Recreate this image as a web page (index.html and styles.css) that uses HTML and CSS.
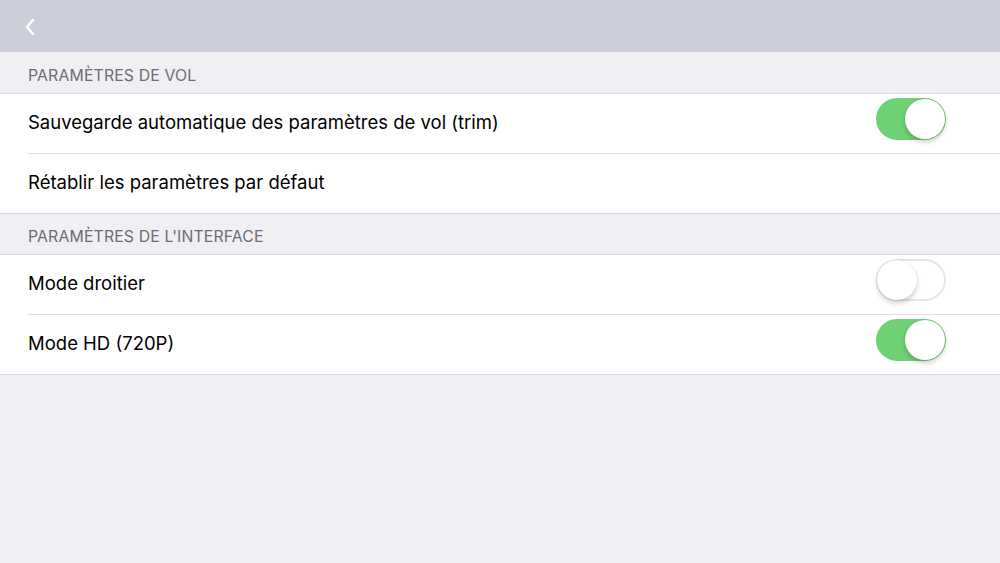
FILE: index.html
```html
<!DOCTYPE html>
<html lang="fr">
<head>
<meta charset="utf-8">
<link rel="stylesheet" href="styles.css">
</head>
<body>
<header class="navbar">
  <svg class="back" width="14" height="20" viewBox="0 0 14 20"><path d="M10 3 L4 10 L10 17" fill="none" stroke="#fff" stroke-width="2.6" stroke-linecap="round" stroke-linejoin="round"/></svg>
</header>
<section class="group">
  <div class="group-title">PARAMÈTRES DE VOL</div>
  <ul class="list">
    <li class="row"><span class="label">Sauvegarde automatique des paramètres de vol (trim)</span><span class="switch on"><span class="knob"></span></span></li>
    <li class="row"><span class="label">Rétablir les paramètres par défaut</span></li>
  </ul>
</section>
<section class="group">
  <div class="group-title">PARAMÈTRES DE L'INTERFACE</div>
  <ul class="list">
    <li class="row"><span class="label">Mode droitier</span><span class="switch"><span class="knob"></span></span></li>
    <li class="row"><span class="label">Mode HD (720P)</span><span class="switch on"><span class="knob"></span></span></li>
  </ul>
</section>
</body>
</html>
```
FILE: styles.css
```css
html, body {
  margin: 0;
  padding: 0;
  height: 100%;
}
body {
  background: #efeff4;
  font-family: "Inter", "Roboto", "Liberation Sans", sans-serif;
  color: #000;
}
.navbar {
  height: 52px;
  background: #c9ced9;
  display: flex;
  align-items: center;
  padding-left: 23px;
}
.back {
  display: block;
  margin-top: 1px;
}
.group-title {
  height: 41px;
  box-sizing: border-box;
  padding: 15px 0 0 28px;
  font-size: 15.8px;
  letter-spacing: 0.15px;
  color: #6d6d72;
  line-height: 18px;
}
.group + .group .group-title {
  height: 40px;
  padding-top: 14px;
}
.list {
  list-style: none;
  margin: 0;
  padding: 0 0 0 28px;
  background: #fff;
  border-top: 1px solid #dcdce0;
  border-bottom: 1px solid #dcdce0;
}
.row {
  height: 59px;
  display: flex;
  align-items: center;
  justify-content: space-between;
  padding-right: 54px;
  border-bottom: 1px solid #e0e0e4;
  font-size: 18.5px;
}
.row:last-child {
  border-bottom: none;
}
.label {
  margin-bottom: 3px;
}
.switch {
  position: relative;
  width: 70px;
  height: 42px;
  margin-bottom: 10px;
  border-radius: 21px;
  box-sizing: border-box;
  background: #fff;
  border: 2px solid #e5e5ea;
  flex: none;
}
.switch.on {
  background: #6fd275;
  border-color: #6fd275;
}
.knob {
  position: absolute;
  top: -1px;
  left: -1px;
  width: 40px;
  height: 40px;
  border-radius: 50%;
  background: #fff;
  box-shadow: 0 3px 5px rgba(0,0,0,0.2), 0 0 1px rgba(0,0,0,0.15);
}
.switch.on .knob {
  left: auto;
  right: -1px;
}
```
